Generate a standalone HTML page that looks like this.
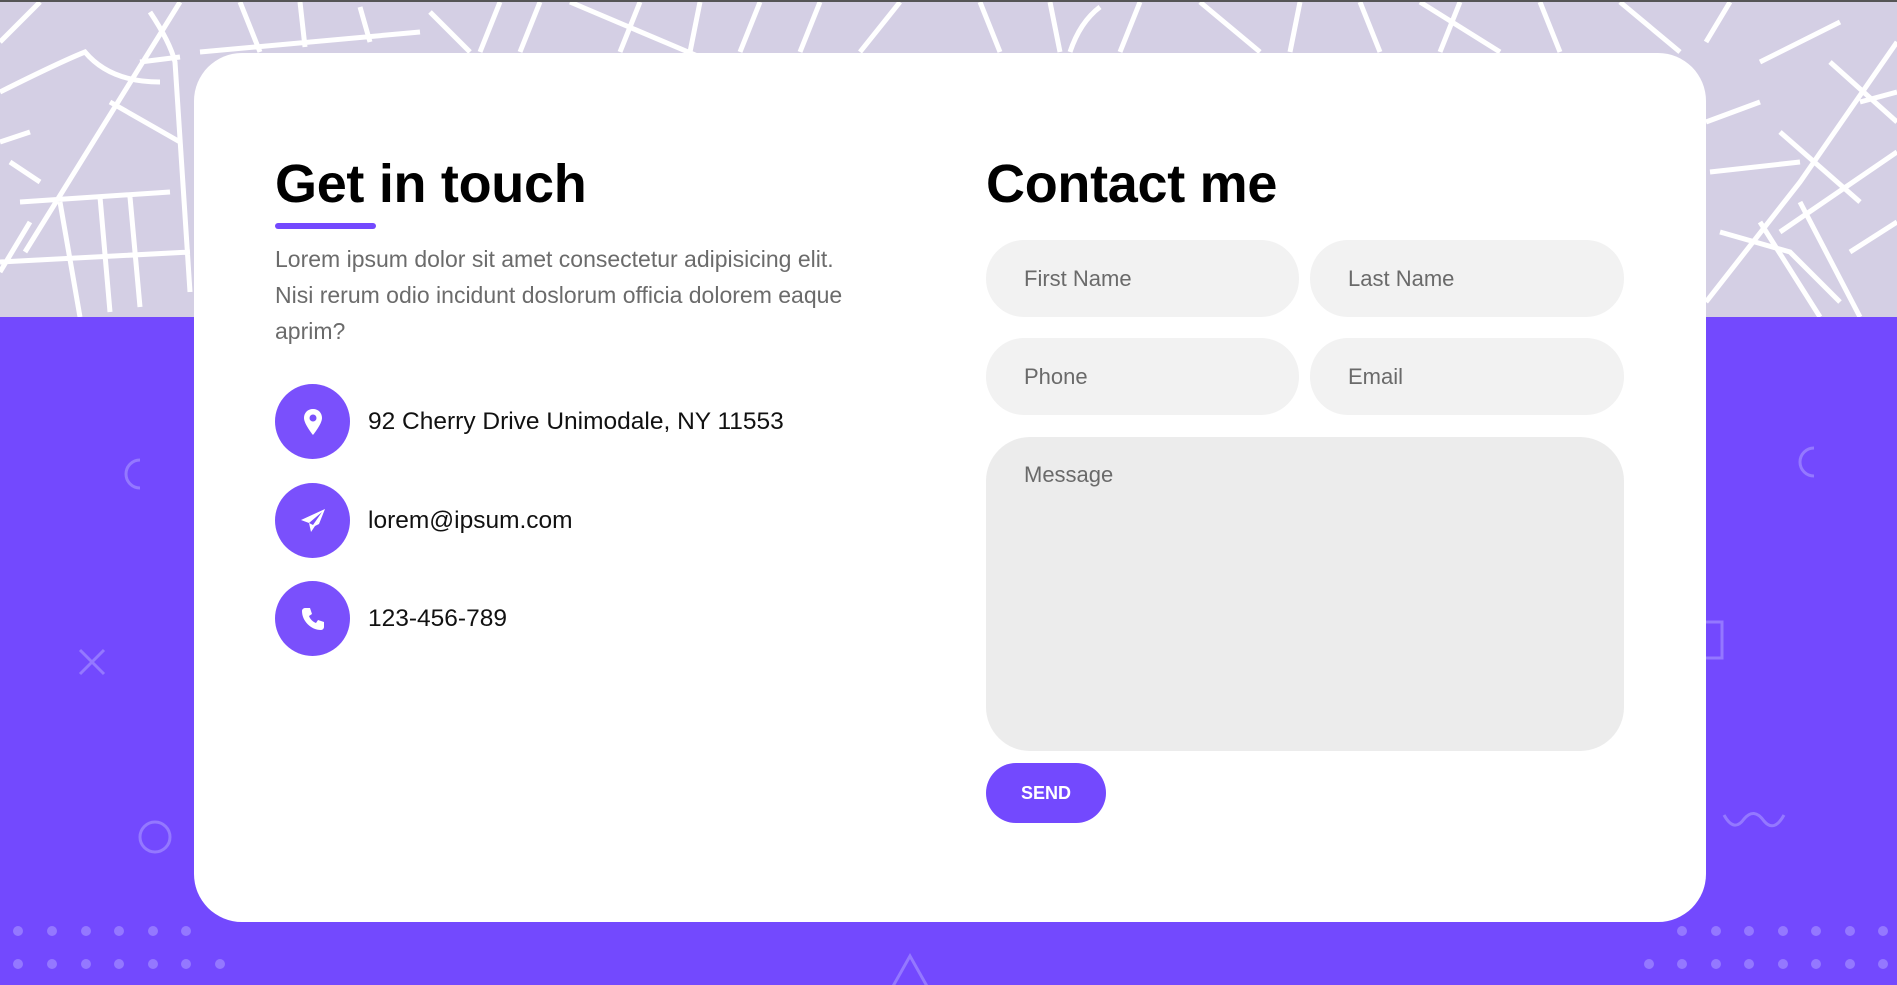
<!DOCTYPE html>
<html><head><meta charset="utf-8"><style>
*{margin:0;padding:0;box-sizing:border-box}
html,body{width:1897px;height:985px;overflow:hidden;font-family:"Liberation Sans",sans-serif}
body{position:relative;background:#7349fe}
.map{position:absolute;left:0;top:0;width:1897px;height:317px;background:#d4cfe4;border-top:2px solid #555}
.card{position:absolute;left:194px;top:53px;width:1512px;height:869px;background:#fff;border-radius:48px}
h1{position:absolute;font-size:54px;font-weight:bold;color:#000;letter-spacing:-0.3px}
.bar{position:absolute;left:81px;top:170px;width:101px;height:6px;border-radius:3px;background:#7349fe}
.p{position:absolute;left:81px;top:188px;width:680px;font-size:23px;line-height:36px;color:#6b6b6b;white-space:nowrap}
.item{position:absolute;left:81px;width:600px;height:75px;display:flex;align-items:center}
.ic{width:75px;height:75px;border-radius:50%;background:#7a50fc;display:flex;align-items:center;justify-content:center;flex:none}
.item span{margin-left:18px;font-size:24.5px;color:#111}
.f{position:absolute;height:77px;border-radius:38px;background:#f2f2f2;font-size:22px;color:#6a6a6a;padding-left:38px;line-height:77px}
.send{position:absolute;left:792px;top:710px;width:120px;height:60px;border-radius:30px;background:#7349fe;color:#fff;font-weight:bold;font-size:18px;text-align:center;line-height:60px}
.dec{position:absolute}
</style></head><body>
<div class="map"><svg width="1897" height="315" stroke="#fff" stroke-width="5" fill="none">
<path d="M0 90 Q60 60 85 50 Q110 80 160 80 M180 0 L25 250 M0 40 L40 0 M150 10 Q170 40 175 60 L190 290 M0 260 L190 250 M20 200 L170 190 M60 200 L80 315 M100 195 L110 310 M130 195 L140 305 M30 220 L0 270 M140 60 L180 55 M110 100 L180 140 M0 140 L30 130 M10 160 L40 180"/>
<path d="M200 50 L420 30 M240 0 L260 50 M300 0 L305 45 M360 5 L370 40 M430 10 L470 50 M500 0 L480 50 M540 0 L520 50 M570 0 L700 55 M640 0 L620 50 M700 0 L690 50 M760 0 L740 50 M820 0 L800 50 M900 0 L860 50 M980 0 L1000 50 M1050 0 L1060 50 M1100 5 Q1080 20 1070 50 M1140 0 L1120 50 M1200 0 L1260 50 M1300 0 L1290 50 M1360 0 L1380 50 M1420 0 L1500 50 M1460 0 L1440 50 M1540 0 L1560 50 M1620 0 L1680 50"/>
<path d="M1706 120 L1760 100 M1730 0 L1706 40 M1760 60 Q1800 40 1840 20 M1897 40 L1800 180 L1706 300 M1780 130 L1860 200 M1710 170 L1800 160 M1897 150 L1780 230 M1760 220 L1820 315 M1800 200 L1860 315 M1860 100 L1897 90 M1850 250 L1897 220 M1720 230 L1790 250 L1840 300 M1830 60 L1897 120"/>
</svg></div>
<svg class="dec" style="left:118px;top:455px" width="40" height="40" stroke="#9478ff" stroke-width="3" fill="none"><path d="M22 5 A14 14 0 0 0 22 33"/></svg>
<svg class="dec" style="left:1792px;top:443px" width="40" height="40" stroke="#9478ff" stroke-width="3" fill="none"><path d="M22 5 A14 14 0 0 0 22 33"/></svg>
<svg class="dec" style="left:78px;top:648px" width="28" height="28" stroke="#9478ff" stroke-width="3"><path d="M2 2L26 26M26 2L2 26"/></svg>
<svg class="dec" style="left:136px;top:818px" width="38" height="38" stroke="#9478ff" stroke-width="3" fill="none"><circle cx="19" cy="19" r="15"/></svg>
<svg class="dec" style="left:1720px;top:805px" width="70" height="30" stroke="#9478ff" stroke-width="3" fill="none"><path d="M4 10 Q14 28 24 14 Q34 2 44 16 Q54 28 64 10"/></svg>
<svg class="dec" style="left:888px;top:950px" width="44" height="40" stroke="#9478ff" stroke-width="3" fill="none"><path d="M4 38L22 6L40 38"/></svg>
<svg class="dec" style="left:0;top:920px" width="240" height="60" fill="#9478ff"><g><circle cx="18" cy="11" r="5"/><circle cx="52" cy="11" r="5"/><circle cx="86" cy="11" r="5"/><circle cx="119" cy="11" r="5"/><circle cx="153" cy="11" r="5"/><circle cx="186" cy="11" r="5"/><circle cx="18" cy="44" r="5"/><circle cx="52" cy="44" r="5"/><circle cx="86" cy="44" r="5"/><circle cx="119" cy="44" r="5"/><circle cx="153" cy="44" r="5"/><circle cx="186" cy="44" r="5"/><circle cx="220" cy="44" r="5"/></g></svg>
<svg class="dec" style="left:1640px;top:920px" width="257" height="60" fill="#9478ff"><g><circle cx="42" cy="11" r="5"/><circle cx="76" cy="11" r="5"/><circle cx="109" cy="11" r="5"/><circle cx="143" cy="11" r="5"/><circle cx="176" cy="11" r="5"/><circle cx="210" cy="11" r="5"/><circle cx="243" cy="11" r="5"/><circle cx="9" cy="44" r="5"/><circle cx="42" cy="44" r="5"/><circle cx="76" cy="44" r="5"/><circle cx="109" cy="44" r="5"/><circle cx="143" cy="44" r="5"/><circle cx="176" cy="44" r="5"/><circle cx="210" cy="44" r="5"/><circle cx="243" cy="44" r="5"/></g></svg>
<svg class="dec" style="left:1700px;top:620px" width="25" height="40" stroke="#9478ff" stroke-width="3" fill="none"><path d="M6 2H22V38H6"/></svg>
<div class="card">
<h1 style="left:81px;top:100px">Get in touch</h1>
<div class="bar"></div>
<div class="p">Lorem ipsum dolor sit amet consectetur adipisicing elit.<br>Nisi rerum odio incidunt doslorum officia dolorem eaque<br>aprim?</div>
<div class="item" style="top:331px"><div class="ic"><svg width="24" height="28" viewBox="0 0 24 28"><path fill="#fff" fill-rule="evenodd" d="M12 1C6.5 1 3 5 3 10c0 6 9 17 9 17s9-11 9-17c0-5-3.5-9-9-9zm0 5.5a3.5 3.5 0 1 1 0 7a3.5 3.5 0 1 1 0-7z"/></svg></div><span>92 Cherry Drive Unimodale, NY 11553</span></div>
<div class="item" style="top:430px"><div class="ic"><svg width="28" height="28" viewBox="0 0 28 28"><path fill="#fff" d="M26 2L2 13l8 3 2 9 4-6 4-2zM10 16l13-11-9 13z"/></svg></div><span>lorem@ipsum.com</span></div>
<div class="item" style="top:528px"><div class="ic"><svg width="26" height="26" viewBox="0 0 26 26"><path fill="#fff" d="M5 2l5 0 2 6-3 2c1 3 4 6 7 7l2-3 6 2v5c0 1-1 3-3 3C11 24 2 15 2 5c0-2 2-3 3-3z"/></svg></div><span>123-456-789</span></div>
<h1 style="left:792px;top:100px">Contact me</h1>
<div class="f" style="left:792px;top:187px;width:313px">First Name</div>
<div class="f" style="left:1116px;top:187px;width:314px">Last Name</div>
<div class="f" style="left:792px;top:285px;width:313px">Phone</div>
<div class="f" style="left:1116px;top:285px;width:314px">Email</div>
<div class="f" style="left:792px;top:384px;width:638px;height:314px;border-radius:44px;background:#ececec;line-height:1;padding-top:27px">Message</div>
<div class="send">SEND</div>
</div>
</body></html>
